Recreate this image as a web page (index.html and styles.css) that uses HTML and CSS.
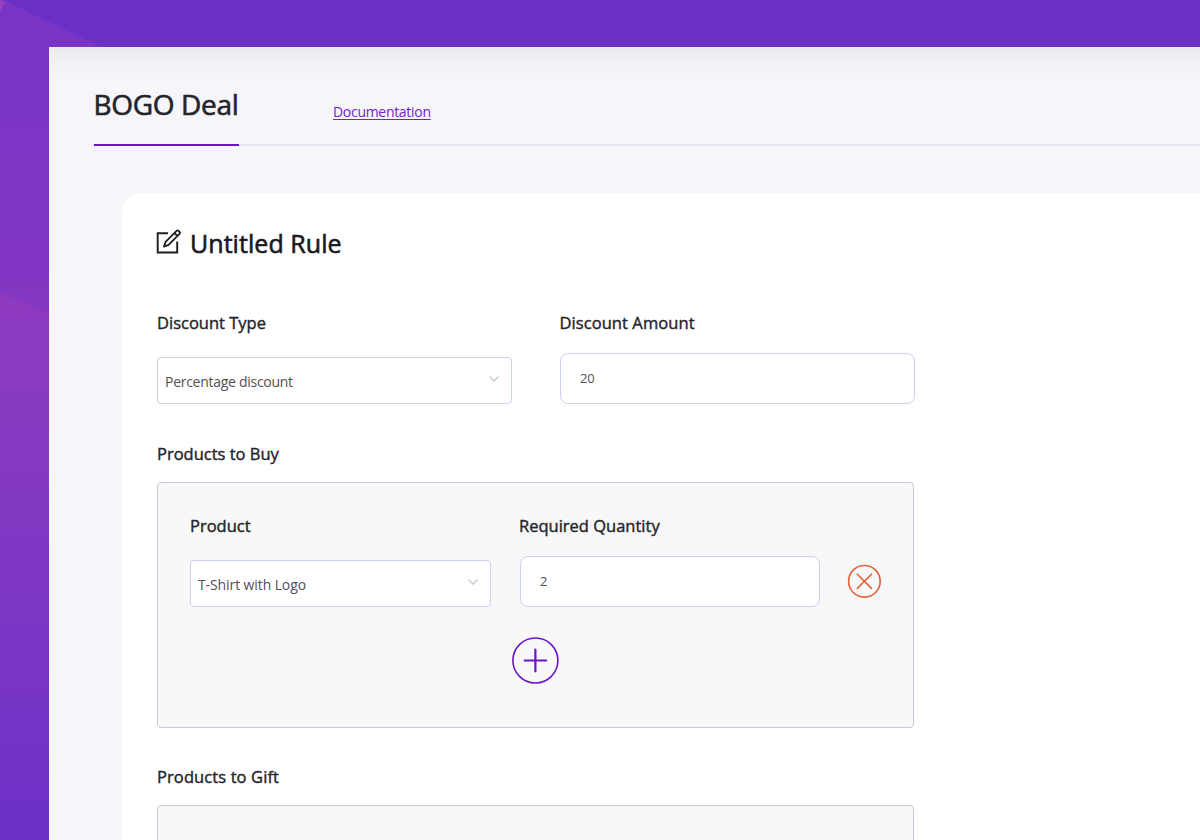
FILE: index.html
```html
<!DOCTYPE html>
<html lang="en">
<head>
<meta charset="utf-8">
<title>BOGO Deal</title>
<link rel="stylesheet" href="styles.css">
</head>
<body>
<div class="page">
  <svg class="backdrop" width="1200" height="840" viewBox="0 0 1200 840" aria-hidden="true">
    <defs>
      <linearGradient id="upper" x1="0" y1="0" x2="0" y2="1"><stop offset="0" stop-color="#7734c6"/><stop offset="1" stop-color="#8437c2"/></linearGradient>
      <linearGradient id="lower" gradientUnits="userSpaceOnUse" x1="0" y1="292" x2="0" y2="840"><stop offset="0" stop-color="#8f3bc0"/><stop offset=".25" stop-color="#863ac2"/><stop offset=".75" stop-color="#7634c5"/><stop offset="1" stop-color="#6d2fc7"/></linearGradient>
    </defs>
    <path d="M0 0H3L106 49V340H0Z" fill="url(#upper)"/>
    <path d="M0 0L6 2Q1 6 0 13Z" fill="#9c41bd"/>
    <path d="M0 292L60 319V840H0Z" fill="url(#lower)"/>
  </svg>
  <main class="app">
    <header class="tabs">
      <h1 class="tab-title"><span class="t-title">BOGO Deal</span></h1>
      <a class="doc-link" href="#">Documentation</a>
    </header>
    <section class="card">
      <h2 class="rule-title">
        <svg class="edit-icon" width="26" height="26" viewBox="0 0 26 26" fill="none" stroke="#1d1d22" stroke-width="1.9"><path d="M12 4.2H1.7V23.5H21.2V12.5"/><path d="M8 17.6L9.6 12.8L20.6 1.8Q21.6.9 22.7 2L23.5 2.8Q24.5 3.9 23.5 4.9L12.6 15.8ZM18.4 4L21.3 6.9" stroke-width="1.8" stroke-linejoin="round"/></svg>
        <span>Untitled Rule</span>
      </h2>
      <div class="discounts">
        <div class="field">
          <div class="label"><span>Discount Type</span></div>
          <div class="select"><span class="t-pct">Percentage discount</span><svg class="chevron" width="12" height="8" viewBox="0 0 12 8"><path d="M1.5 1.5L6 6L10.5 1.5"/></svg></div>
        </div>
        <div class="field">
          <div class="label label-amount"><span>Discount Amount</span></div>
          <div class="input">20</div>
        </div>
      </div>
      <div class="label group-label"><span>Products to Buy</span></div>
      <div class="panel">
        <div class="product-row">
          <div class="field">
            <div class="label"><span>Product</span></div>
            <div class="select"><span class="t-shirt">T-Shirt with Logo</span><svg class="chevron" width="12" height="8" viewBox="0 0 12 8"><path d="M1.5 1.5L6 6L10.5 1.5"/></svg></div>
          </div>
          <div class="field">
            <div class="label label-qty"><span>Required Quantity</span></div>
            <div class="input">2</div>
          </div>
          <svg class="remove" width="34" height="34" viewBox="0 0 34 34" fill="none" stroke="#e0633a" stroke-width="1.6" stroke-linecap="round"><circle cx="17.4" cy="17.3" r="15.8"/><path d="M10.3 10.2L24.5 24.4M24.5 10.2L10.3 24.4"/></svg>
        </div>
        <svg class="add" width="48" height="48" viewBox="0 0 48 48" fill="none" stroke="#6c12cc" stroke-linecap="round"><circle cx="24.4" cy="23.5" r="22.5" stroke-width="1.6"/><path d="M24.4 12.7V34.3M13.6 23.5H35.2" stroke-width="2.2"/></svg>
      </div>
      <div class="label group-label"><span class="t-gift">Products to Gift</span></div>
      <div class="panel"></div>
    </section>
  </main>
</div>
</body>
</html>
```
FILE: styles.css
```css
* { box-sizing: border-box; }
body { margin: 0; overflow: hidden; font-family: "Open Sans", "Noto Sans", sans-serif; color: #24242b; }
.page { position: relative; width: 1200px; height: 840px; overflow: hidden; background: #6d30c7; padding: 47px 0 0 49px; }
.backdrop { position: absolute; left: 0; top: 0; }
.app { position: relative; height: 793px; overflow: hidden; background: linear-gradient(#eaeaef, #f0f0f5 12px, #f5f5fa 30px, #f5f5fa); padding-left: 44.5px; }
h1, h2 { margin: 0; font-weight: 500; }
span { white-space: nowrap; }
.tabs { display: flex; height: 99px; border-bottom: 2px solid #e4e3ef; }
.tab-title { width: 145.5px; height: 98.5px; padding-top: 37px; font-size: 28px; line-height: 41px; letter-spacing: -.34px; border-bottom: 2px solid #6c12cc; flex: none; -webkit-text-stroke: .6px #24242b; }
.doc-link { margin-left: 94px; padding-top: 55px; font-size: 14px; line-height: 20px; letter-spacing: -.3px; color: #7420cc; text-underline-offset: 2px; }
.card { margin: 47px 0 0 28.5px; height: 700px; background: #fff; border-radius: 18px 0 0 0; padding: 30px 0 0 35px; }
.rule-title { display: flex; height: 40px; line-height: 40px; font-size: 25px; letter-spacing: .05px; color: #18181f; -webkit-text-stroke: .6px #18181f; }
.edit-icon { margin: 6px 8px 0 -1px; flex: none; }
.discounts { display: grid; grid-template-columns: 355px 355px; column-gap: 48px; padding-top: 48px; height: 141px; }
.label { height: 24px; line-height: 24px; font-size: 16.5px; font-weight: 500; -webkit-text-stroke: .4px #24242b; }
.label-amount { margin-left: -.6px; letter-spacing: .08px; }
.select, .input { display: flex; border: 1px solid #c9d1f3; background: #fff; color: #505054; font-size: 14px; }
.select { height: 47px; margin-top: 22px; border-radius: 4px; padding: 2px 11px 0 7px; align-items: center; justify-content: space-between; }
.input { height: 51px; margin-top: 18px; border-radius: 8px; align-items: center; padding: 0 0 1px 19px; font-size: 13px; letter-spacing: -.2px; }
.t-pct { letter-spacing: -.28px; }
.t-shirt { letter-spacing: -.1px; }
.t-gift { letter-spacing: .1px; }
.chevron { fill: none; stroke: #cfcfd2; stroke-width: 1.6; margin-top: -5px; }
.group-label { margin-top: 38px; }
.panel { width: 757px; height: 246px; margin-top: 16px; border: 1px solid #cac8dc; border-radius: 4px; background: #f8f8f8; padding: 31px 0 0 32px; }
.panel + .group-label { margin-top: 37px; }
.product-row { display: grid; grid-template-columns: 301px 300px 34px; column-gap: 29px; height: 94px; }
.label-qty { margin-left: -1px; }
.remove { margin: 50px 0 0 -2px; }
.add { display: block; margin: 29px 0 0 321px; }
```
